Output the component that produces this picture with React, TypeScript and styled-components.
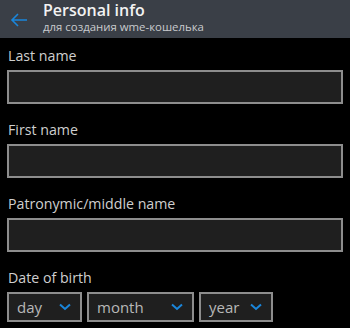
import styled, { createGlobalStyle } from "styled-components";

const GlobalStyle = createGlobalStyle`
  html, body {
    margin: 0;
    padding: 0;
    background: #000;
  }
  body {
    font-family: "Open Sans", "Noto Sans", sans-serif;
  }
`;

const Page = styled.div`
  width: 350px;
  height: 328px;
  overflow: hidden;
  background: #000;
`;

const Header = styled.header`
  height: 38px;
  background: #3a3f47;
  display: flex;
  align-items: center;
  padding-left: 10px;
  gap: 15px;
`;

const BackButton = styled.button`
  width: 18px;
  height: 18px;
  padding: 0;
  border: 0;
  background: none;
  display: flex;
  align-items: center;
  justify-content: center;
  margin-top: 1px;
`;

const Titles = styled.div`
  align-self: flex-start;
  display: flex;
  flex-direction: column;
`;

const Title = styled.h1`
  margin: 0;
  font-size: 16px;
  line-height: 20px;
  font-weight: 600;
  color: #f2f2f2;
`;

const Subtitle = styled.div`
  margin-top: 1px;
  font-size: 11.4px;
  line-height: 12px;
  color: #c9cbce;
`;

const Form = styled.form`
  display: flex;
  flex-direction: column;
  gap: 16px;
  padding: 8px 7px 0;
`;

const Field = styled.div`
  display: flex;
  flex-direction: column;
  gap: 4px;
`;

const Label = styled.label`
  font-size: 14.2px;
  line-height: 20px;
  color: #cfcfcf;
  padding-left: 1px;
`;

const TextInput = styled.input`
  box-sizing: border-box;
  width: 336px;
  height: 34px;
  margin: 0;
  border: 2px solid #8d8d8d;
  background: #1f1f1f;
  color: #ddd;
  outline: none;
  font: inherit;
`;

const SelectRow = styled.div`
  display: flex;
  gap: 5px;
`;

const Select = styled.div<{ $w: number }>`
  box-sizing: border-box;
  width: ${(p) => p.$w}px;
  height: 30px;
  border: 2px solid #8d8d8d;
  background: #1f1f1f;
  display: flex;
  align-items: center;
  justify-content: space-between;
  padding: 0 9px 1px 8px;
  font-size: 15px;
  color: #b8b8b8;
`;

const Chevron = () => (
  <svg width="12" height="8" viewBox="0 0 12 8">
    <path d="M1 1.5l5 4.5 5-4.5" fill="none" stroke="#1a86db" strokeWidth="2" />
  </svg>
);

const fields = ["Last name", "First name", "Patronymic/middle name"];

const selects = [
  { text: "day", w: 75 },
  { text: "month", w: 107 },
  { text: "year", w: 74 },
];

export default function App() {
  return (
    <Page>
      <GlobalStyle />
      <Header>
        <BackButton>
          <svg width="18" height="14" viewBox="0 0 18 14">
            <path
              d="M17 7H2M8 1L2 7l6 6"
              fill="none"
              stroke="#1a86db"
              strokeWidth="1.6"
            />
          </svg>
        </BackButton>
        <Titles>
          <Title>Personal info</Title>
          <Subtitle>для создания wme-кошелька</Subtitle>
        </Titles>
      </Header>
      <Form>
        {fields.map((f) => (
          <Field key={f}>
            <Label>{f}</Label>
            <TextInput />
          </Field>
        ))}
        <Field>
          <Label>Date of birth</Label>
          <SelectRow>
            {selects.map((s) => (
              <Select key={s.text} $w={s.w}>
                {s.text}
                <Chevron />
              </Select>
            ))}
          </SelectRow>
        </Field>
      </Form>
    </Page>
  );
}
